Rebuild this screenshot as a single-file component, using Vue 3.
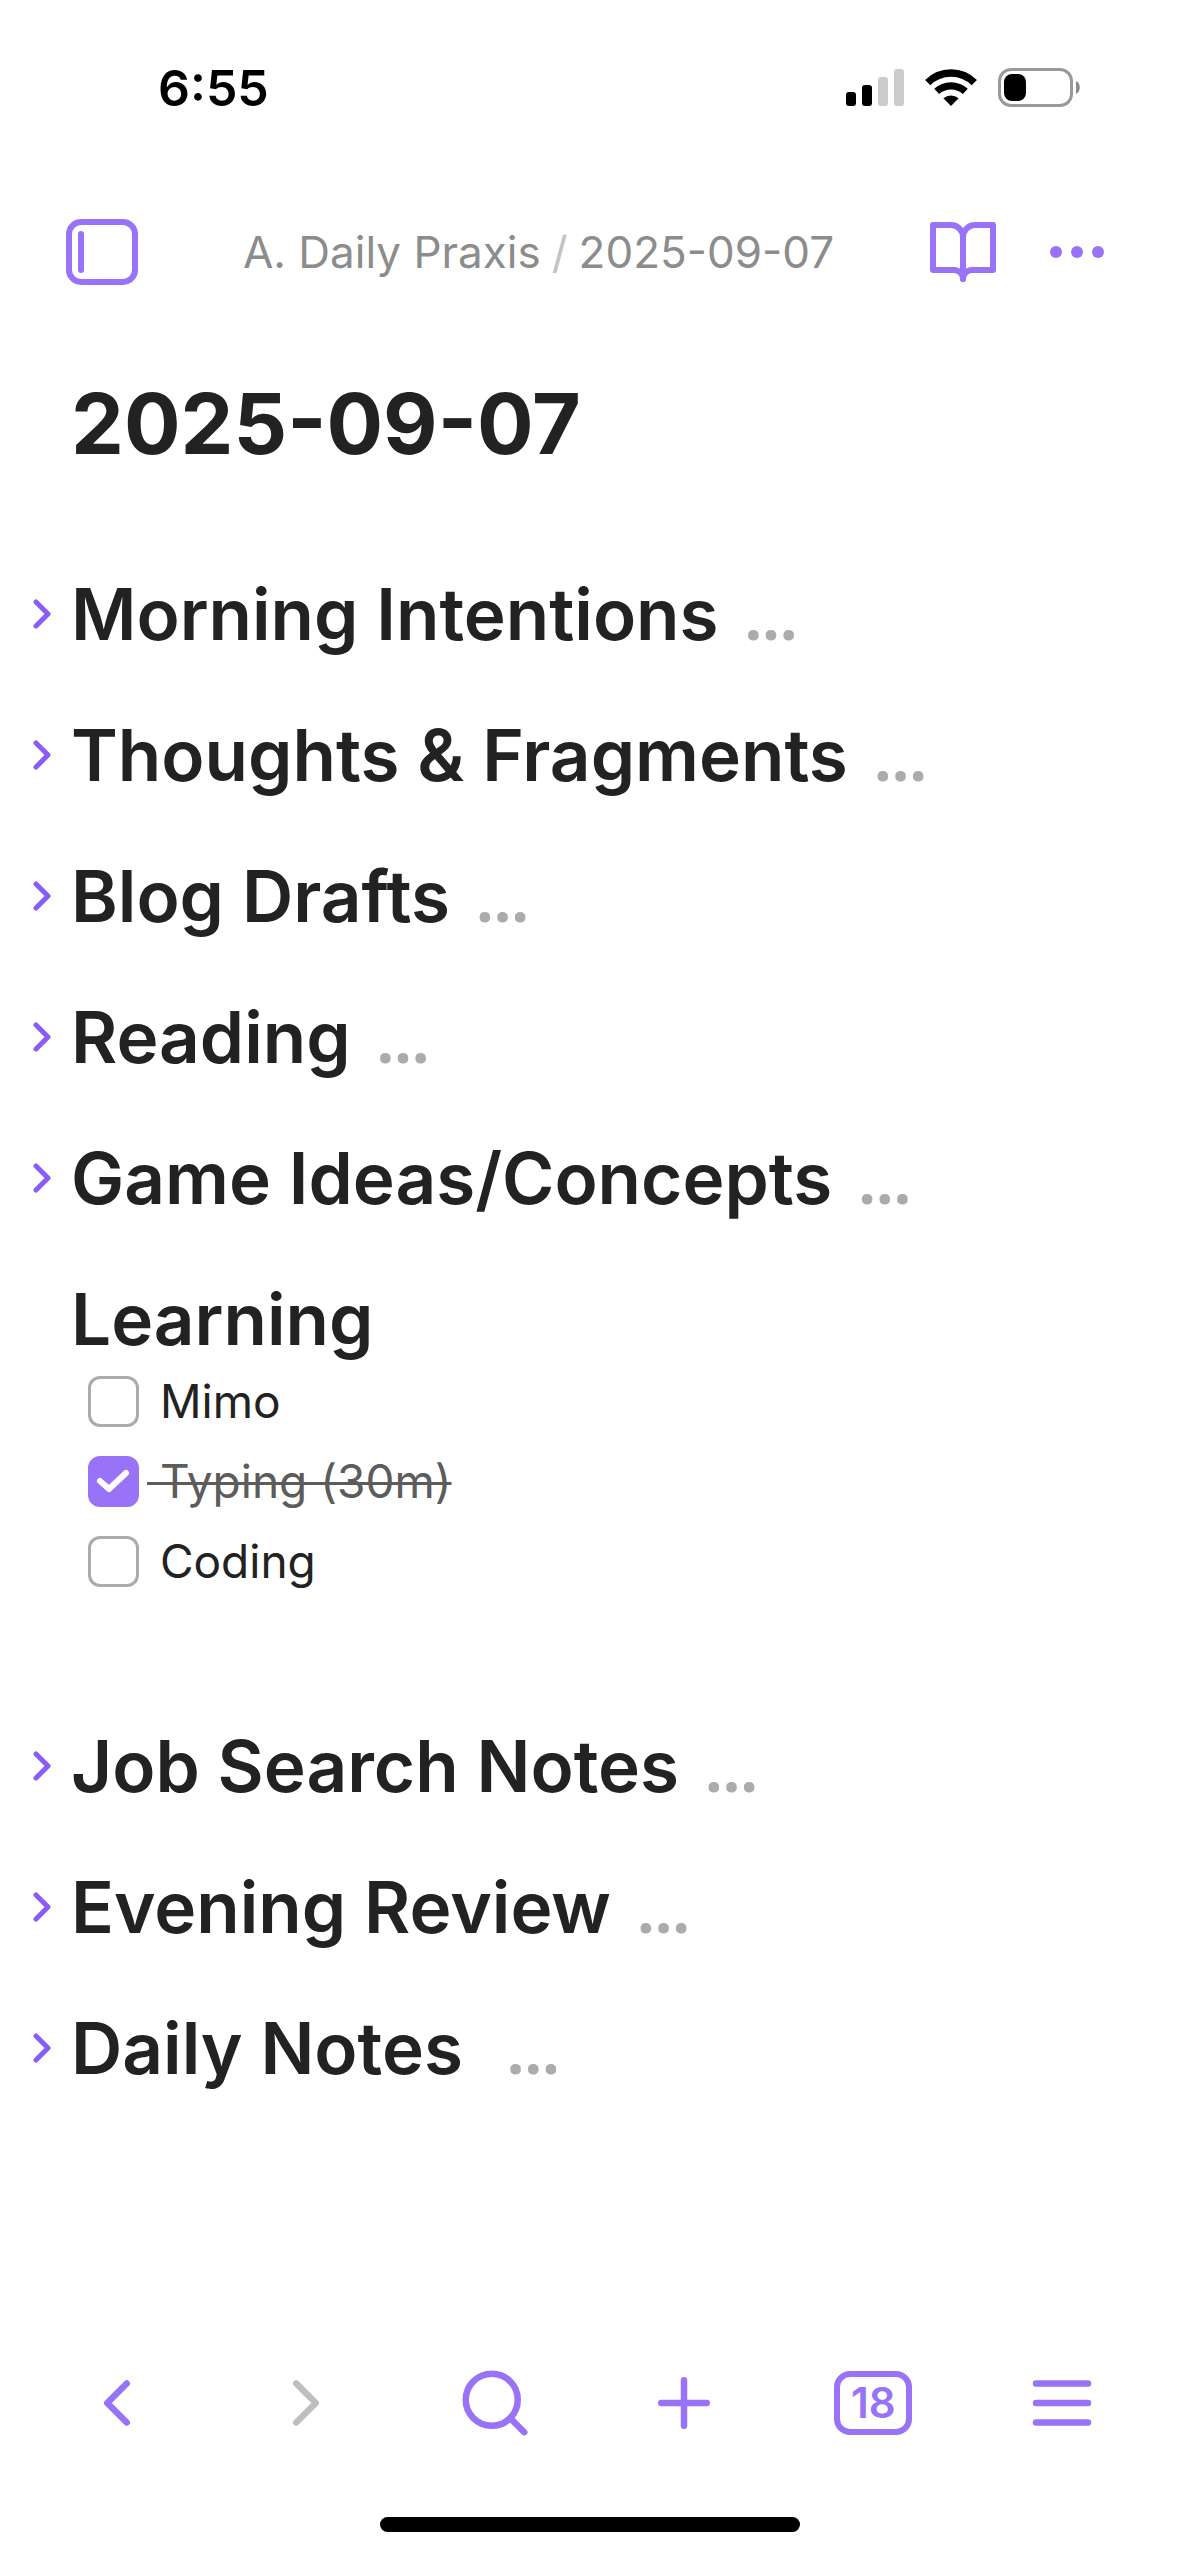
<script setup>
import { ref } from 'vue'

const before = ref([
  { title: 'Morning Intentions' },
  { title: 'Thoughts & Fragments' },
  { title: 'Blog Drafts' },
  { title: 'Reading' },
  { title: 'Game Ideas/Concepts' },
])
const tasks = ref([
  { id: 'mimo', label: 'Mimo', done: false },
  { id: 'typing', label: 'Typing (30m)', done: true },
  { id: 'coding', label: 'Coding', done: false },
])
const after = ref([
  { title: 'Job Search Notes' },
  { title: 'Evening Review' },
  { title: 'Daily Notes', trailing: true },
])
</script>

<template>
  <div class="app">
    <div class="status">
      <span class="clock">6:55</span>
      <div class="indicators">
        <svg width="58" height="38" viewBox="0 0 58 38" aria-hidden="true">
          <rect x="0" y="23" width="10" height="14" rx="3" />
          <rect x="16" y="16" width="10" height="21" rx="3" />
          <rect x="32" y="8" width="10" height="29" rx="3" fill="#ccc" />
          <rect x="48" y="0" width="10" height="37" rx="3" fill="#ccc" />
        </svg>
        <svg width="52" height="38" viewBox="0 0 52 38" aria-hidden="true">
          <path d="M2.7 13.7a33 33 0 0 1 46.6 0" fill="none" stroke="#000" stroke-width="7.4" />
          <path d="M11.7 22.4a21 21 0 0 1 28.6 0" fill="none" stroke="#000" stroke-width="7.2" />
          <path d="M26 37l-7.6-7.8a12 12 0 0 1 15.2 0z" />
        </svg>
        <svg width="83" height="40" viewBox="0 0 83 40" aria-hidden="true">
          <rect x="1.5" y="1.5" width="72" height="36" rx="11.5" fill="none" stroke="#999" stroke-width="3" />
          <rect x="6" y="6" width="22" height="27" rx="8" />
          <path d="M78 13c5 2 5 11 0 13z" fill="#8a8a8a" />
        </svg>
      </div>
    </div>

    <header class="topbar">
      <button type="button" aria-label="Toggle sidebar">
        <svg width="72" height="66" viewBox="0 0 72 66" class="line">
          <rect x="3" y="3" width="66" height="60" rx="12" stroke-width="6" />
          <path d="M15 15v36" stroke-width="6" />
        </svg>
      </button>
      <nav class="crumbs" aria-label="Breadcrumb">
        <a href="#folder">A. Daily Praxis</a><span class="slash">/</span><a href="#note">2025-09-07</a>
      </nav>
      <div class="actions">
        <button type="button" aria-label="Reading view">
          <svg width="72" height="72" viewBox="0 0 24 24" class="line">
            <path d="M2 3h6a4 4 0 0 1 4 4v14a3 3 0 0 0-3-3H2z" />
            <path d="M22 3h-6a4 4 0 0 0-4 4v14a3 3 0 0 1 3-3h7z" />
          </svg>
        </button>
        <button type="button" aria-label="More options">
          <svg width="72" height="72" viewBox="0 0 24 24" class="dots">
            <circle cx="5" cy="12" r="2" />
            <circle cx="12" cy="12" r="2" />
            <circle cx="19" cy="12" r="2" />
          </svg>
        </button>
      </div>
    </header>

    <main class="note">
      <h1>2025-09-07</h1>

      <section v-for="item in before" :key="item.title" class="section">
        <button type="button" class="fold" :aria-label="`Expand ${item.title}`">
          <svg width="18" height="30" viewBox="0 0 18 30"><path d="M3 3l12 12L3 27" /></svg>
        </button>
        <h2>{{ item.title }}</h2>
        <button type="button" class="more" :aria-label="`Show ${item.title}`">…</button>
      </section>

      <section class="section"><h2>Learning</h2></section>
      <ul class="tasks">
        <li v-for="task in tasks" :key="task.id">
          <span class="check">
            <input :id="task.id" v-model="task.done" type="checkbox" />
            <svg v-if="task.done" viewBox="0 0 51 51" aria-hidden="true"><path d="M12 25l9 8 17-16" /></svg>
          </span>
          <label :for="task.id" :class="{ done: task.done }">{{ ' ' + task.label }}</label>
        </li>
      </ul>

      <section v-for="item in after" :key="item.title" class="section">
        <button type="button" class="fold" :aria-label="`Expand ${item.title}`">
          <svg width="18" height="30" viewBox="0 0 18 30"><path d="M3 3l12 12L3 27" /></svg>
        </button>
        <h2>{{ item.title + (item.trailing ? ' ' : '') }}</h2>
        <button type="button" class="more" :aria-label="`Show ${item.title}`">…</button>
      </section>
    </main>

    <footer>
      <nav class="toolbar" aria-label="Toolbar">
        <button type="button" aria-label="Back">
          <svg width="78" height="78" viewBox="0 0 24 24" class="line"><path d="M15 18l-6-6 6-6" /></svg>
        </button>
        <button type="button" aria-label="Forward" disabled>
          <svg width="78" height="78" viewBox="0 0 24 24" class="line"><path d="M9 18l6-6-6-6" /></svg>
        </button>
        <button type="button" aria-label="Search">
          <svg width="78" height="78" viewBox="0 0 24 24" class="line">
            <circle cx="11" cy="11" r="8" />
            <path d="M21 21l-4.3-4.3" />
          </svg>
        </button>
        <button type="button" aria-label="New note">
          <svg width="78" height="78" viewBox="0 0 24 24" class="line"><path d="M12 5v14M5 12h14" /></svg>
        </button>
        <button type="button" aria-label="18 open tabs"><span class="tabs">18</span></button>
        <button type="button" aria-label="Menu">
          <svg width="78" height="78" viewBox="0 0 24 24" class="line"><path d="M4 6h16M4 12h16M4 18h16" /></svg>
        </button>
      </nav>
      <div class="home"></div>
    </footer>
  </div>
</template>

<style>
body {
  background: #fff;
}
</style>

<style scoped>
.app {
  display: flex;
  flex-direction: column;
  min-height: 100vh;
  font-family: Inter, "Liberation Sans", sans-serif;
  color: #222;
}
.app * {
  box-sizing: border-box;
}
button {
  display: flex;
  align-items: center;
  justify-content: center;
  padding: 0;
  border: 0;
  background: none;
  color: #9973f7;
  font: inherit;
}
svg {
  display: block;
  flex: none;
}
.line {
  fill: none;
  stroke: currentColor;
  stroke-width: 2;
  stroke-linecap: round;
  stroke-linejoin: round;
}
.dots {
  fill: currentColor;
}

.status {
  display: flex;
  align-items: center;
  justify-content: space-between;
  height: 176px;
  padding: 0 98px 0 158px;
  color: #000;
}
.clock {
  font-size: 50px;
  font-weight: 600;
}
.indicators {
  display: flex;
  align-items: center;
  gap: 21px;
}

.topbar {
  display: flex;
  align-items: center;
  height: 152px;
  padding: 0 66px;
}
.crumbs {
  flex: 1;
  padding-left: 12px;
  text-align: center;
  font-size: 44px;
  white-space: nowrap;
}
.crumbs a {
  color: #8c8c8c;
  text-decoration: none;
}
.slash {
  margin: 0 11px;
  color: #c2c2c2;
}
.actions {
  display: flex;
  gap: 42px;
}

.note {
  flex: 1;
  padding: 46px 71px 0;
}
h1 {
  margin: 0 0 98px;
  font-size: 84px;
  font-weight: 700;
  line-height: 100px;
}
h2 {
  margin: 0;
  font-size: 71px;
  font-weight: 600;
  line-height: 84px;
  white-space: pre;
}
.section {
  display: flex;
  align-items: baseline;
  height: 84px;
  margin-bottom: 57px;
}
.fold {
  align-self: center;
  justify-content: flex-start;
  width: 38px;
  margin-left: -38px;
}
.fold path {
  fill: none;
  stroke: #8a5cf5;
  stroke-width: 5;
  stroke-linecap: round;
  stroke-linejoin: round;
}
.more {
  margin-left: 26px;
  color: #ababab;
  font-family: "Open Sans", "Noto Sans", sans-serif;
  font-size: 62px;
  font-weight: 700;
  line-height: 60px;
}

.tasks {
  margin: -57px 0 123px;
  padding: 0 0 0 17px;
  list-style: none;
}
.tasks li {
  display: flex;
  align-items: center;
  gap: 8px;
  height: 80px;
}
.check {
  display: grid;
  width: 51px;
  height: 51px;
}
.check > * {
  grid-area: 1 / 1;
}
.check input {
  appearance: none;
  margin: 0;
  border: 3px solid #ababab;
  border-radius: 12px;
}
.check input:checked {
  border-color: #9973f7;
  background: #9973f7;
}
.check svg {
  z-index: 1;
  pointer-events: none;
}
.check path {
  fill: none;
  stroke: #fff;
  stroke-width: 6;
  stroke-linecap: round;
  stroke-linejoin: round;
}
label {
  font-size: 46px;
  white-space: pre;
}
label.done {
  color: #5c5c5c;
  text-decoration: line-through;
  text-decoration-thickness: 3px;
}

.toolbar {
  display: grid;
  grid-template-columns: repeat(6, 1fr);
  height: 120px;
  padding: 0 22px;
}
.toolbar button:disabled {
  color: #bebebe;
}
.tabs {
  width: 78px;
  height: 64px;
  border: 6px solid currentColor;
  border-radius: 16px;
  font-size: 42px;
  font-weight: 600;
  line-height: 52px;
}
.home {
  width: 420px;
  height: 15px;
  margin: 54px auto 24px;
  border-radius: 8px;
  background: #000;
}
</style>
